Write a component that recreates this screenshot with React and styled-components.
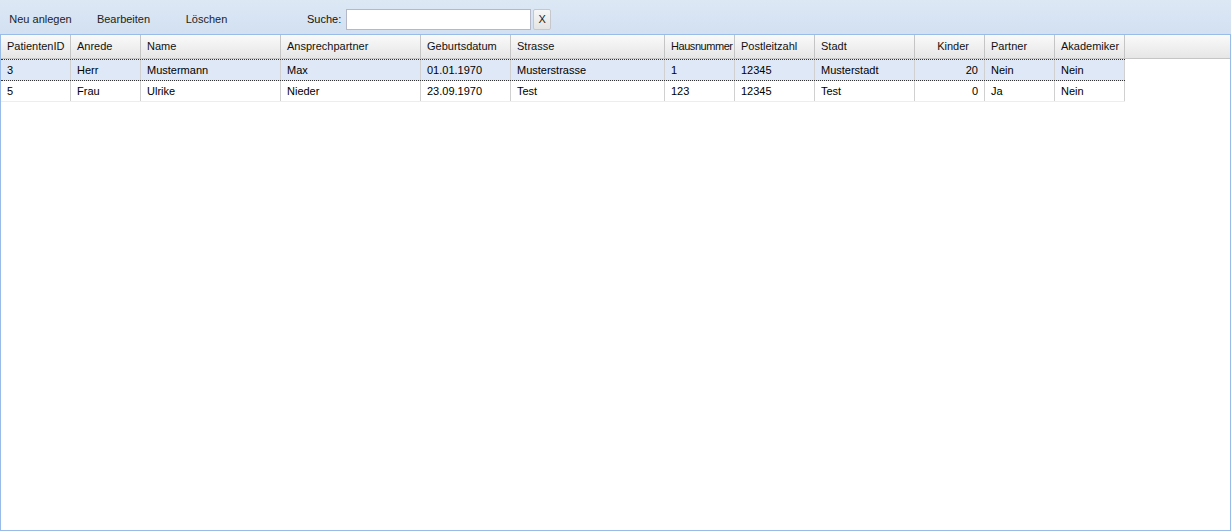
import React from 'react'
import styled, { createGlobalStyle } from 'styled-components'

const Global = createGlobalStyle`
  html, body { margin: 0; padding: 0; background: #fff; }
  body { font-family: "Liberation Sans", Arial, sans-serif; font-size: 11px; }
`

const columns = [
  { key: 'id', title: 'PatientenID', width: 70 },
  { key: 'anrede', title: 'Anrede', width: 70 },
  { key: 'name', title: 'Name', width: 140 },
  { key: 'ansprech', title: 'Ansprechpartner', width: 140 },
  { key: 'geb', title: 'Geburtsdatum', width: 90 },
  { key: 'strasse', title: 'Strasse', width: 154 },
  { key: 'hausnr', title: 'Hausnummer', width: 70, tight: true },
  { key: 'plz', title: 'Postleitzahl', width: 80 },
  { key: 'stadt', title: 'Stadt', width: 100 },
  { key: 'kinder', title: 'Kinder', width: 70, right: true },
  { key: 'partner', title: 'Partner', width: 70 },
  { key: 'akad', title: 'Akademiker', width: 70 },
]

const rows = [
  { id: '3', anrede: 'Herr', name: 'Mustermann', ansprech: 'Max', geb: '01.01.1970', strasse: 'Musterstrasse', hausnr: '1', plz: '12345', stadt: 'Musterstadt', kinder: '20', partner: 'Nein', akad: 'Nein', selected: true },
  { id: '5', anrede: 'Frau', name: 'Ulrike', ansprech: 'Nieder', geb: '23.09.1970', strasse: 'Test', hausnr: '123', plz: '12345', stadt: 'Test', kinder: '0', partner: 'Ja', akad: 'Nein' },
]

const Panel = styled.div`
  width: 1231px;
  height: 531px;
  display: flex;
  flex-direction: column;
  box-sizing: border-box;
`

const Toolbar = styled.div`
  height: 34px;
  display: flex;
  align-items: center;
  background: linear-gradient(#dde8f5, #d2e0f1);
  color: #222;
`

const ToolButton = styled.div`
  width: 81px;
  margin-right: 2px;
  text-align: center;
  line-height: 20px;
  margin-top: 4px;
  cursor: pointer;
`

const SearchLabel = styled.span`
  margin-left: 58px;
  margin-top: 4px;
  color: #111;
`

const SearchInput = styled.input`
  width: 185px;
  height: 21px;
  box-sizing: border-box;
  margin: 4px 0 0 5px;
  border: 1px solid #b5b8c8;
  background: #fff;
  padding: 0 3px;
  font: inherit;
  outline: none;
`

const ClearButton = styled.button`
  width: 18px;
  height: 21px;
  margin: 4px 0 0 2px;
  padding: 0;
  border: 1px solid #c4c8cc;
  border-radius: 2px;
  background: linear-gradient(#f6f6f6, #e4e4e4);
  font: inherit;
  color: #222;
`

const Grid = styled.div`
  flex: 1;
  border: 1px solid #99bbe8;
  background: #fff;
  display: flex;
  flex-direction: column;
`

const HeaderRow = styled.div`
  display: flex;
  height: 23px;
  border-bottom: 1px solid #c5c5c5;
  background: linear-gradient(#fafafa, #e6e6e6);
`

const HeaderCell = styled.div`
  width: ${p => p.$width}px;
  flex: none;
  box-sizing: border-box;
  border-right: 1px solid #c5c5c5;
  padding: 0 ${p => (p.$right ? 15 : p.$tight ? 0 : 1)}px 0 6px;
  letter-spacing: ${p => (p.$tight ? '-0.45px' : 'normal')};
  line-height: 23px;
  text-align: ${p => (p.$right ? 'right' : 'left')};
  white-space: nowrap;
  overflow: hidden;
  color: #111;
`

const HeaderFiller = styled.div`
  flex: 1;
`

const Row = styled.div`
  display: flex;
  align-self: flex-start;
  height: 20px;
  border-top: ${p => (p.$selected ? '1px dotted #333' : 'none')};
  border-bottom: 1px ${p => (p.$selected ? 'dotted #333' : 'solid #ededed')};
  background: ${p => (p.$selected ? '#dfe8f6' : '#fff')};
`

const Cell = styled.div`
  width: ${p => p.$width}px;
  flex: none;
  box-sizing: border-box;
  border-right: 1px solid #d0d0d0;
  padding: 0 6px;
  line-height: 20px;
  text-align: ${p => (p.$right ? 'right' : 'left')};
  white-space: nowrap;
  overflow: hidden;
  color: #000;
`

export default function App() {
  return (
    <Panel>
      <Global />
      <Toolbar>
        <ToolButton>Neu anlegen</ToolButton>
        <ToolButton>Bearbeiten</ToolButton>
        <ToolButton>Löschen</ToolButton>
        <SearchLabel>Suche:</SearchLabel>
        <SearchInput />
        <ClearButton>X</ClearButton>
      </Toolbar>
      <Grid>
        <HeaderRow>
          {columns.map(c => (
            <HeaderCell key={c.key} $width={c.width} $right={c.right} $tight={c.tight}>{c.title}</HeaderCell>
          ))}
          <HeaderFiller />
        </HeaderRow>
        {rows.map(r => (
          <Row key={r.id} $selected={r.selected}>
            {columns.map(c => (
              <Cell key={c.key} $width={c.width} $right={c.right}>{r[c.key]}</Cell>
            ))}
          </Row>
        ))}
      </Grid>
    </Panel>
  )
}
